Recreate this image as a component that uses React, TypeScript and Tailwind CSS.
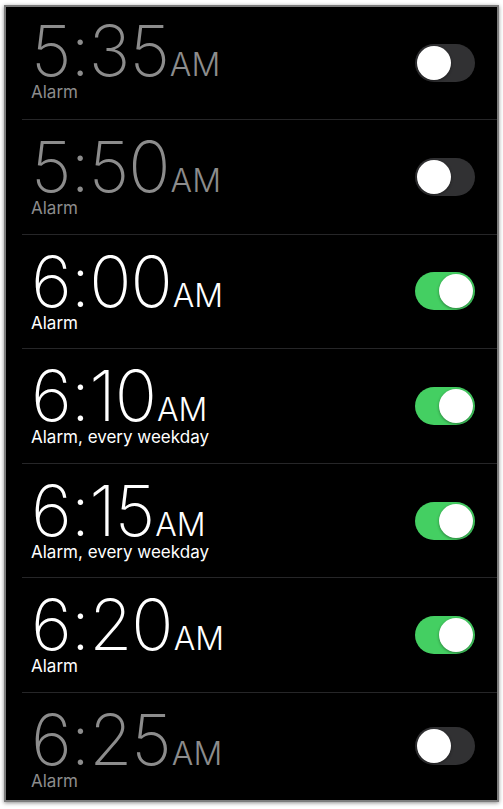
import React from 'react';

type Alarm = {
  time: string;
  label: string;
  on: boolean;
};

const ALARMS: Alarm[] = [
  { time: '5:35', label: 'Alarm', on: false },
  { time: '5:50', label: 'Alarm', on: false },
  { time: '6:00', label: 'Alarm', on: true },
  { time: '6:10', label: 'Alarm, every weekday', on: true },
  { time: '6:15', label: 'Alarm, every weekday', on: true },
  { time: '6:20', label: 'Alarm', on: true },
  { time: '6:25', label: 'Alarm', on: false },
];

function Toggle({ on }: { on: boolean }) {
  return (
    <div
      className={`flex h-[38px] w-[60px] shrink-0 items-center rounded-full p-[2px] ${
        on ? 'justify-end bg-[#44cf62]' : 'justify-start bg-[#313133]'
      }`}
    >
      <div className="h-[34px] w-[34px] rounded-full bg-white shadow-[0_1px_3px_rgba(0,0,0,0.4)]" />
    </div>
  );
}

function AlarmRow({ alarm, index }: { alarm: Alarm; index: number }) {
  const first = index === 0;
  const last = index === ALARMS.length - 1;
  const color = alarm.on ? 'text-white' : 'text-[#8c8c8c]';

  return (
    <div
      className={`ml-[16px] flex items-center justify-between pr-[22px] pl-[9px] ${
        first ? 'h-[113px]' : last ? 'flex-1' : 'h-[114.6px]'
      } ${last ? '' : 'border-b border-[#262628]'}`}
    >
      <div className={`flex flex-col self-start ${color} ${first ? 'pt-[18px]' : 'pt-[21px]'}`}>
        <div className="flex h-[52px] items-baseline leading-[52px]">
          <span className="text-[70px] font-extralight tracking-[-1px]">{alarm.time}</span>
          <span className="ml-[1px] text-[32px] font-light">AM</span>
        </div>
        <span className="mt-[7px] text-[17px] leading-[17px]">{alarm.label}</span>
      </div>
      <Toggle on={alarm.on} />
    </div>
  );
}

export default function App() {
  return (
    <div className="h-[809px] w-[503px] bg-white pt-[5px] pl-[4px]" style={{ fontFamily: 'Inter, "Noto Sans", sans-serif' }}>
      <div className="flex h-[797px] w-[495px] flex-col border-2 border-[#7c7c7c] bg-black shadow-[0_1px_4px_rgba(0,0,0,0.45)]">
        {ALARMS.map((alarm, i) => (
          <AlarmRow key={alarm.time} alarm={alarm} index={i} />
        ))}
      </div>
    </div>
  );
}
